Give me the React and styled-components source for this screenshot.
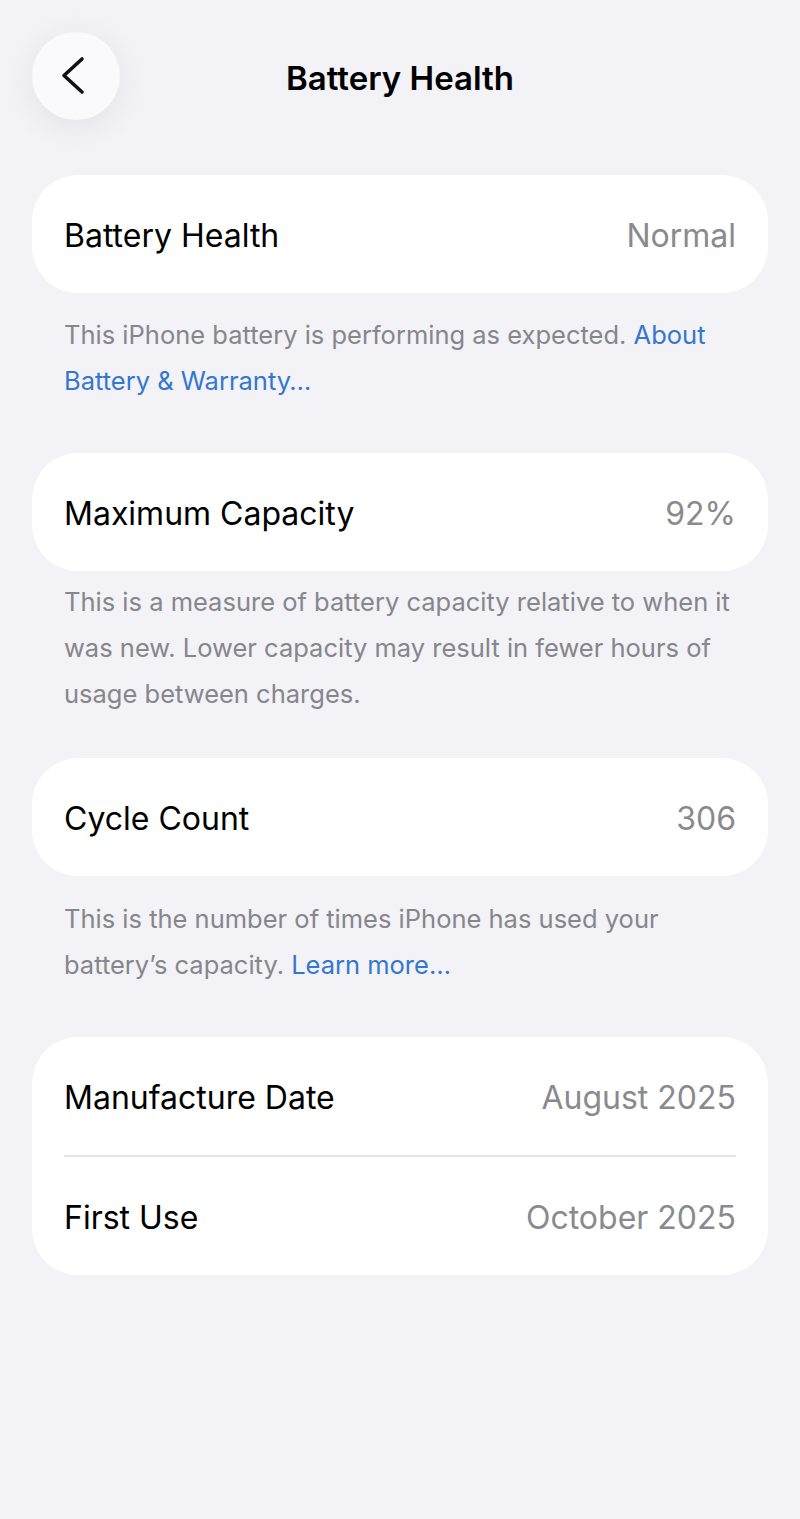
import React from 'react'
import styled, { createGlobalStyle } from 'styled-components'

const GlobalStyle = createGlobalStyle`
  html, body {
    margin: 0;
    padding: 0;
    background: #f2f2f7;
  }
  body {
    font-family: Inter, "Noto Sans", "Liberation Sans", sans-serif;
    -webkit-font-smoothing: antialiased;
  }
`

const Page = styled.div`
  min-height: 1519px;
  box-sizing: border-box;
  padding: 32px 32px;
  background: #f2f2f7;
`

const Header = styled.header`
  display: grid;
  grid-template-columns: 88px 1fr 88px;
  align-items: center;
  height: 88px;
`

const BackButton = styled.button`
  width: 88px;
  height: 88px;
  border: none;
  border-radius: 50%;
  padding: 0;
  background: #fafafc;
  box-shadow: 0 6px 34px rgba(0, 0, 0, 0.07);
  display: flex;
  align-items: center;
  justify-content: center;
  cursor: pointer;
`

const Title = styled.h1`
  margin: 4px 0 0;
  text-align: center;
  font-size: 33px;
  font-weight: 600;
  letter-spacing: 0;
  color: #000;
`

const Card = styled.section`
  margin-top: ${p => p.$gap}px;
  background: #fff;
  border-radius: 46px;
  padding: 0 32px;
`

const Row = styled.div`
  display: flex;
  align-items: center;
  justify-content: space-between;
  height: 118px;
  padding-top: 2px;
  box-sizing: border-box;
`

const Divider = styled.div`
  height: 2px;
  background: #e4e4e9;
`

const Label = styled.span`
  font-size: 32px;
  color: #000;
`

const Value = styled.span`
  font-size: 32px;
  color: #8a8a8e;
`

const Note = styled.p`
  margin: ${p => p.$gap}px 0 0;
  padding: 0 32px;
  font-size: 25.5px;
  line-height: 46px;
  color: #86868b;
`

const Link = styled.a`
  color: #3477cf;
  text-decoration: none;
`

function Chevron() {
  return (
    <svg width="88" height="88" viewBox="0 0 88 88" fill="none">
      <path
        d="M50 27 L32 43.5 L50 60"
        stroke="#111"
        strokeWidth="3.6"
        strokeLinecap="round"
        strokeLinejoin="round"
      />
    </svg>
  )
}

export default function App() {
  return (
    <Page>
      <GlobalStyle />
      <Header>
        <BackButton aria-label="Back">
          <Chevron />
        </BackButton>
        <Title>Battery Health</Title>
        <span />
      </Header>

      <Card $gap={55}>
        <Row>
          <Label>Battery Health</Label>
          <Value>Normal</Value>
        </Row>
      </Card>
      <Note $gap={19}>
        This iPhone battery is performing as expected. <Link href="#">About Battery &amp; Warranty…</Link>
      </Note>

      <Card $gap={49}>
        <Row>
          <Label>Maximum Capacity</Label>
          <Value>92%</Value>
        </Row>
      </Card>
      <Note $gap={8}>
        This is a measure of battery capacity relative to when it was new. Lower capacity may result in fewer hours of usage between charges.
      </Note>

      <Card $gap={41}>
        <Row>
          <Label>Cycle Count</Label>
          <Value>306</Value>
        </Row>
      </Card>
      <Note $gap={20}>
        This is the number of times iPhone has used your battery’s capacity. <Link href="#">Learn more…</Link>
      </Note>

      <Card $gap={49}>
        <Row>
          <Label>Manufacture Date</Label>
          <Value>August 2025</Value>
        </Row>
        <Divider />
        <Row>
          <Label>First Use</Label>
          <Value>October 2025</Value>
        </Row>
      </Card>
    </Page>
  )
}
